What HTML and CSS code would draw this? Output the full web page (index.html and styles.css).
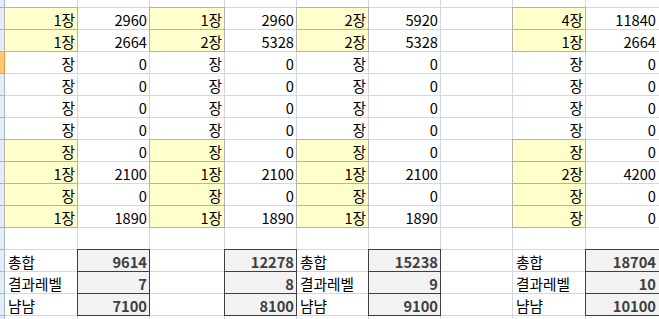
FILE: index.html
```html
<!DOCTYPE html>
<html lang="ko">
<head>
<meta charset="utf-8">
<link rel="stylesheet" href="styles.css">
</head>
<body>
<div class="sheet">
  <!-- top partial row -->
  <div class="h"></div><div class="c"></div><div class="c"></div><div class="c"></div><div class="c"></div><div class="c"></div><div class="c"></div><div class="c"></div><div class="c"></div><div class="c"></div>

  <div class="h"></div><div class="c n">1장</div><div class="c">2960</div><div class="c n">1장</div><div class="c">2960</div><div class="c n">2장</div><div class="c">5920</div><div class="c"></div><div class="c n">4장</div><div class="c">11840</div>
  <div class="h"></div><div class="c n">1장</div><div class="c">2664</div><div class="c n">2장</div><div class="c">5328</div><div class="c n">2장</div><div class="c">5328</div><div class="c"></div><div class="c n">1장</div><div class="c">2664</div>
  <div class="h sel"></div><div class="c">장</div><div class="c">0</div><div class="c">장</div><div class="c">0</div><div class="c">장</div><div class="c">0</div><div class="c"></div><div class="c">장</div><div class="c">0</div>
  <div class="h"></div><div class="c">장</div><div class="c">0</div><div class="c">장</div><div class="c">0</div><div class="c">장</div><div class="c">0</div><div class="c"></div><div class="c">장</div><div class="c">0</div>
  <div class="h"></div><div class="c">장</div><div class="c">0</div><div class="c">장</div><div class="c">0</div><div class="c">장</div><div class="c">0</div><div class="c"></div><div class="c">장</div><div class="c">0</div>
  <div class="h"></div><div class="c">장</div><div class="c">0</div><div class="c">장</div><div class="c">0</div><div class="c">장</div><div class="c">0</div><div class="c"></div><div class="c">장</div><div class="c">0</div>
  <div class="h"></div><div class="c n">장</div><div class="c">0</div><div class="c n">장</div><div class="c">0</div><div class="c n">장</div><div class="c">0</div><div class="c"></div><div class="c n">장</div><div class="c">0</div>
  <div class="h"></div><div class="c n">1장</div><div class="c">2100</div><div class="c n">1장</div><div class="c">2100</div><div class="c n">1장</div><div class="c">2100</div><div class="c"></div><div class="c n">2장</div><div class="c">4200</div>
  <div class="h"></div><div class="c n">장</div><div class="c">0</div><div class="c n">장</div><div class="c">0</div><div class="c n">장</div><div class="c">0</div><div class="c"></div><div class="c n">장</div><div class="c">0</div>
  <div class="h"></div><div class="c n">1장</div><div class="c">1890</div><div class="c n">1장</div><div class="c">1890</div><div class="c n">1장</div><div class="c">1890</div><div class="c"></div><div class="c n">장</div><div class="c">0</div>

  <div class="h"></div><div class="c"></div><div class="c"></div><div class="c"></div><div class="c"></div><div class="c"></div><div class="c"></div><div class="c"></div><div class="c"></div><div class="c"></div>

  <div class="h"></div><div class="c l">총합</div><div class="c o">9614</div><div class="c"></div><div class="c o">12278</div><div class="c l">총합</div><div class="c o">15238</div><div class="c"></div><div class="c l">총합</div><div class="c o">18704</div>
  <div class="h"></div><div class="c l">결과레벨</div><div class="c o">7</div><div class="c"></div><div class="c o">8</div><div class="c l">결과레벨</div><div class="c o">9</div><div class="c"></div><div class="c l">결과레벨</div><div class="c o">10</div>
  <div class="h"></div><div class="c l">냠냠</div><div class="c o">7100</div><div class="c"></div><div class="c o">8100</div><div class="c l">냠냠</div><div class="c o">9100</div><div class="c"></div><div class="c l">냠냠</div><div class="c o">10100</div>

  <!-- bottom partial row -->
  <div class="h"></div><div class="c"></div><div class="c"></div><div class="c"></div><div class="c"></div><div class="c"></div><div class="c"></div><div class="c"></div><div class="c"></div><div class="c"></div>
</div>
</body>
</html>
```

FILE: styles.css
```css
html, body {
  margin: 0;
  padding: 0;
  background: #ffffff;
  overflow: hidden;
}

.sheet {
  display: grid;
  grid-template-columns: 5px 73px 72px 75px 72px 72px 72px 72px 73px 76px;
  grid-template-rows: 8px repeat(14, 22px) 8px;
  width: 662px;
  font-family: "Noto Sans CJK KR", "Noto Sans", sans-serif;
  font-size: 14.67px;
  color: #000000;
}

.c {
  box-sizing: border-box;
  border-right: 1px solid #d0d7e5;
  border-bottom: 1px solid #d0d7e5;
  display: flex;
  align-items: flex-end;
  justify-content: flex-end;
  padding: 0 2px 1px 3px;
  line-height: 17px;
  white-space: nowrap;
  overflow: visible;
}

.c:nth-child(10n) {
  padding-right: 5px;
}

.l {
  justify-content: flex-start;
}

.n {
  background: #ffffcc;
  border-right-color: #b2b2b2;
  border-bottom-color: #b2b2b2;
  box-shadow: -1px 0 0 #b2b2b2, 0 -1px 0 #b2b2b2, -1px -1px 0 #b2b2b2;
}

.o {
  background: #f2f2f2;
  border-right-color: #3f3f3f;
  border-bottom-color: #3f3f3f;
  box-shadow: -1px 0 0 #3f3f3f, 0 -1px 0 #3f3f3f, -1px -1px 0 #3f3f3f;
  font-weight: bold;
  color: #3f3f3f;
}

.h {
  box-sizing: border-box;
  background: #e4ecf7;
  border-right: 1px solid #9eb6ce;
  border-bottom: 1px solid #9eb6ce;
}

.h.sel {
  background: #f8c977;
  border-right-color: #f29536;
  border-bottom-color: #f29536;
}
```
